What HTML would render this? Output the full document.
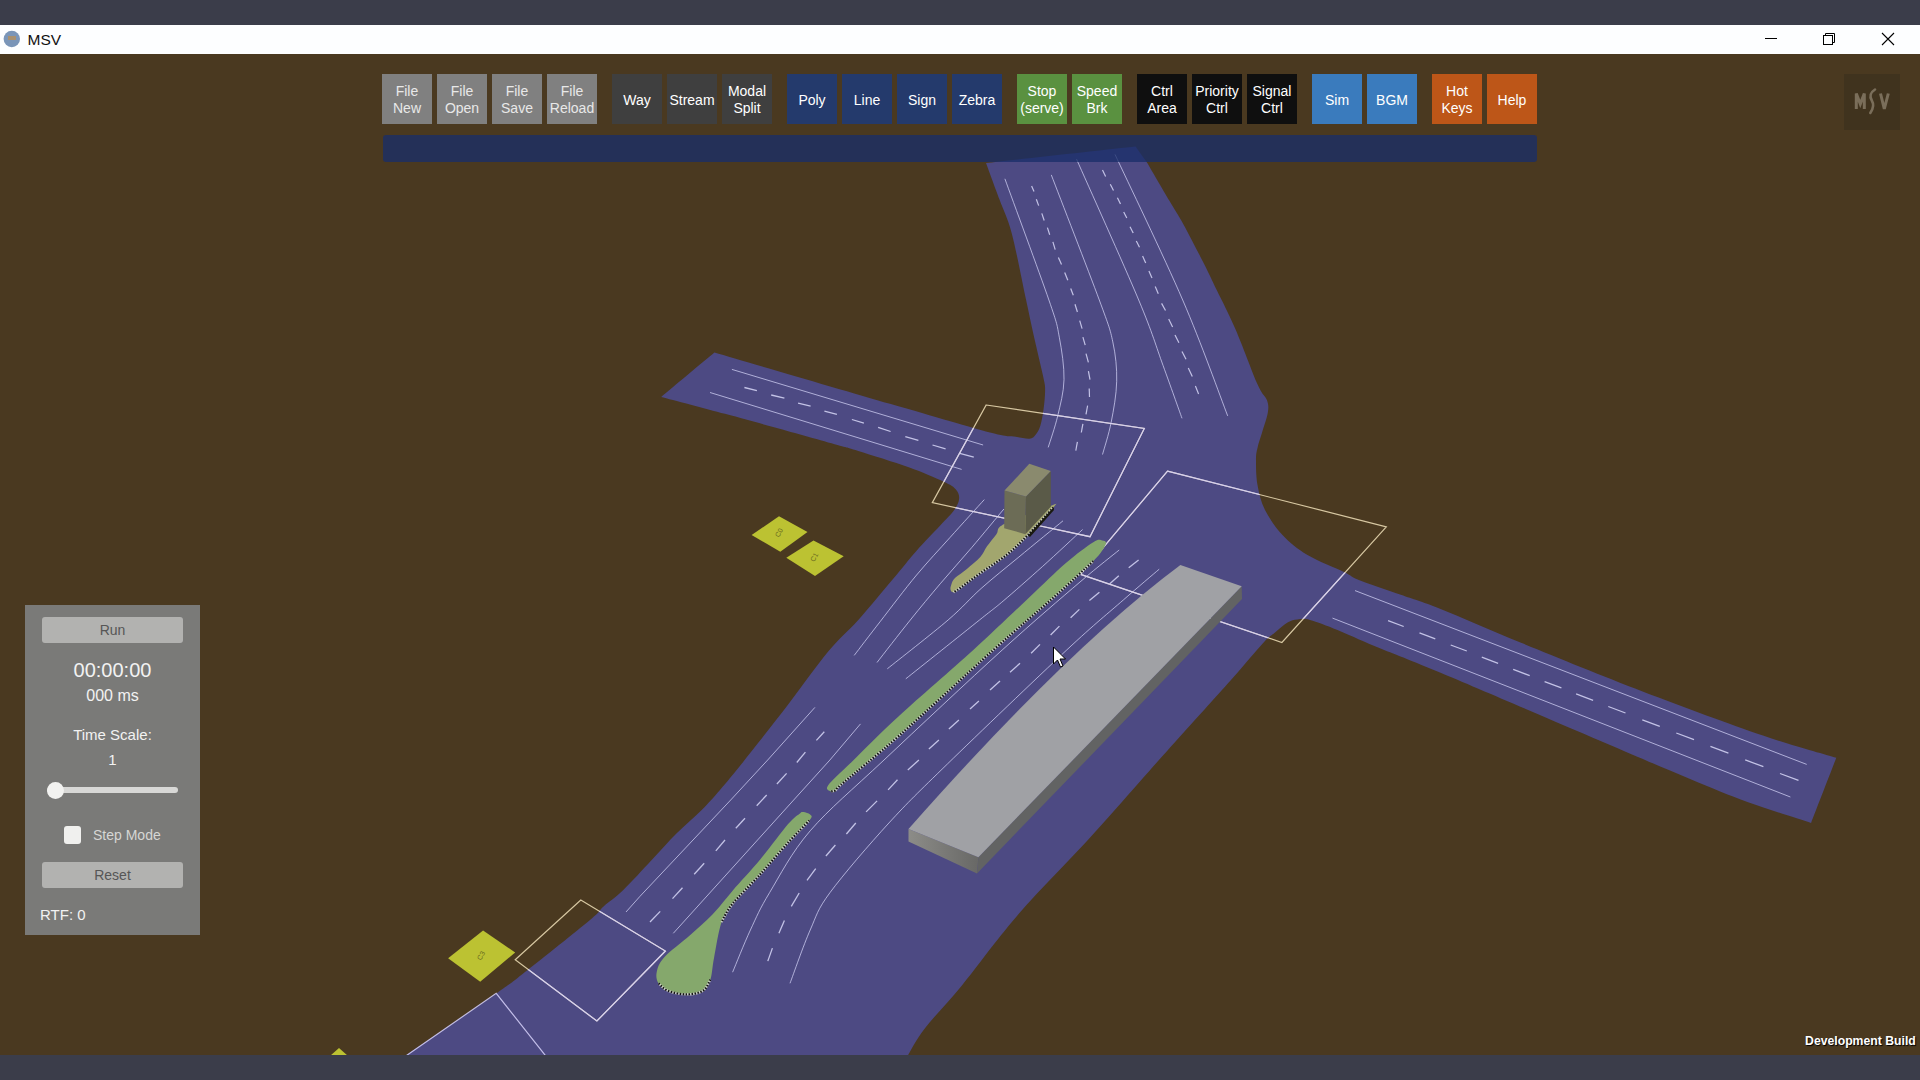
<!DOCTYPE html>
<html><head><meta charset="utf-8">
<style>
*{margin:0;padding:0;box-sizing:border-box}
html,body{width:1920px;height:1080px;overflow:hidden;background:#3b3d4a;font-family:"Liberation Sans",sans-serif}
#top{position:absolute;left:0;top:0;width:1920px;height:25px;background:#3b3d4a}
#title{position:absolute;left:0;top:25px;width:1920px;height:29px;background:#fdfeff}
#title .ic{position:absolute;left:4px;top:31px}
#scene{position:absolute;left:0;top:54px;width:1920px;height:1001px;background:#4a3920;overflow:hidden}
#bottom{position:absolute;left:0;top:1055px;width:1920px;height:25px;background:#3b3d4a}
.btn{position:absolute;top:74px;width:50px;height:50px;padding-top:2px;color:#fff;font-size:14px;line-height:17px;display:flex;align-items:center;justify-content:center;text-align:center}
.g1{background:#808080;color:#e8e8e8}
.g2{background:#3f3f3f}
.g3{background:#243a6c}
.g4{background:#5a9140}
.g5{background:#0f0f0f}
.g6{background:#3a7bbd}
.g7{background:#bd5618}
#bar{position:absolute;left:383px;top:135px;width:1154px;height:27px;background:rgba(25,45,105,0.77);border-radius:3px}
#panel{position:absolute;left:25px;top:605px;width:175px;height:330px;background:#7a7a78}
.pb{position:absolute;left:17px;width:141px;height:26px;background:#b2b2b0;border-radius:3px;color:#565656;font-size:14px;text-align:center;line-height:26px}
.pt{position:absolute;left:0;width:175px;text-align:center;color:#f2f2f2}
#dev{position:absolute;right:4px;top:1032.5px;color:#fff;font-weight:bold;font-size:13px;text-shadow:1px 1px 1px #000;transform:scaleX(0.94);transform-origin:right center;white-space:nowrap}
</style></head><body>
<div id="top"></div>
<div id="title">
  <svg width="1920" height="29" style="position:absolute;left:0;top:0">
    <circle cx="11.8" cy="14" r="8.2" fill="#7a95b8"/>
    <rect x="8" y="11" width="8" height="4" fill="#a89070"/>
    <text x="27.5" y="19.5" font-family="Liberation Sans" font-size="15.5" fill="#111">MSV</text>
    <line x1="1765" y1="13.5" x2="1777" y2="13.5" stroke="#000" stroke-width="1"/>
    <rect x="1823.5" y="10.5" width="9" height="9" fill="none" stroke="#000" stroke-width="1"/>
    <path d="M1825.5 10.5 V8.5 H1834.5 V17.5 H1832.5" fill="none" stroke="#000" stroke-width="1"/>
    <path d="M1882 8 L1894 20 M1894 8 L1882 20" stroke="#000" stroke-width="1.1"/>
  </svg>
</div>
<div id="scene">
<svg id="world" width="1920" height="1001" viewBox="0 54 1920 1001" style="position:absolute;left:0;top:0">
<defs><clipPath id="roadclip"><path d="M405.0,1056.0 C420.3,1045.5 476.7,1007.2 497.0,993.0 C517.3,978.8 511.2,983.0 526.7,970.8 C542.2,958.6 577.2,930.7 590.0,920.0 C602.8,909.3 597.8,911.7 603.3,906.7 C608.8,901.7 615.2,897.8 623.3,890.0 C631.4,882.2 642.8,869.5 651.7,860.0 C660.6,850.5 668.4,841.6 676.7,833.3 C685.0,825.0 694.5,817.2 701.7,810.0 C708.9,802.8 713.1,798.0 720.0,790.0 C726.9,782.0 731.8,776.1 743.3,761.7 C754.8,747.3 774.8,721.8 788.9,703.4 C803.0,685.0 816.6,665.4 828.2,651.5 C839.8,637.6 847.5,632.1 858.3,620.0 C869.1,607.9 883.3,590.6 893.0,579.1 C902.7,567.6 908.7,559.6 916.6,550.7 C924.5,541.8 933.9,532.4 940.2,525.6 C946.5,518.8 951.2,514.3 954.4,509.8 C957.5,505.3 958.9,502.2 959.1,498.8 C959.4,495.4 958.5,492.3 955.9,489.4 C953.3,486.5 951.2,485.2 943.3,481.5 C935.4,477.8 922.9,472.4 908.7,467.3 C894.5,462.2 870.2,454.7 858.3,451.0 C846.4,447.3 851.4,448.9 837.5,445.0 C823.6,441.1 793.8,432.7 775.0,427.5 C756.2,422.3 744.0,418.9 725.0,413.8 C706.0,408.6 671.9,399.7 661.2,396.9 C670.1,389.5 705.5,359.9 714.4,352.5 C743.7,361.0 844.1,390.4 890.0,403.8 C935.9,417.1 969.4,427.1 990.0,432.5 C1010.6,437.9 1007.0,435.4 1013.6,436.4 C1020.2,437.4 1025.7,439.0 1029.4,438.7 C1033.1,438.4 1033.8,437.0 1035.6,434.8 C1037.4,432.6 1039.1,429.6 1040.4,425.4 C1041.7,421.2 1042.7,415.4 1043.5,409.6 C1044.3,403.8 1045.1,395.9 1045.1,390.7 C1045.1,385.4 1045.3,387.0 1043.5,378.1 C1041.7,369.2 1037.0,350.2 1034.1,337.2 C1031.2,324.2 1029.8,317.2 1026.1,300.0 C1022.4,282.8 1016.3,250.7 1011.9,233.9 C1007.5,217.1 1003.7,211.1 999.4,199.3 C995.1,187.5 988.2,169.1 986.0,163.0 C1010.9,160.2 1110.6,149.2 1135.5,146.5 C1137.5,149.2 1145.3,160.2 1147.3,163.0 C1151.0,169.3 1163.4,190.6 1169.4,200.8 C1175.4,211.0 1177.7,213.9 1183.5,224.4 C1189.3,234.9 1198.5,252.9 1204.0,263.8 C1209.5,274.7 1211.4,279.1 1216.7,290.0 C1222.0,300.9 1228.8,313.7 1235.6,329.4 C1242.4,345.1 1252.4,372.6 1257.6,384.4 C1262.8,396.2 1265.3,395.5 1267.0,400.2 C1268.7,404.9 1268.6,407.6 1267.8,412.8 C1267.0,418.1 1264.0,425.9 1262.3,431.7 C1260.6,437.5 1258.6,442.7 1257.6,447.4 C1256.5,452.1 1256.0,453.7 1256.0,460.0 C1256.0,466.3 1256.0,476.7 1257.5,485.0 C1259.0,493.3 1260.8,501.7 1265.0,510.0 C1269.2,518.3 1275.4,527.5 1282.5,535.0 C1289.6,542.5 1297.1,548.8 1307.5,555.0 C1317.9,561.2 1336.5,568.3 1345.0,572.5 C1353.5,576.7 1349.5,576.3 1358.8,580.0 C1368.0,583.7 1387.3,590.0 1400.8,594.8 C1414.3,599.6 1419.8,600.7 1440.0,608.8 C1460.2,616.8 1487.9,629.3 1521.7,643.1 C1555.5,656.9 1602.4,676.1 1642.6,691.5 C1682.8,706.9 1730.7,724.6 1763.0,735.6 C1795.3,746.6 1824.1,754.1 1836.3,757.8 C1832.1,768.7 1815.3,812.1 1811.1,823.0 C1800.6,819.5 1768.5,809.6 1748.1,802.2 C1727.7,794.8 1713.6,788.8 1688.9,778.5 C1664.2,768.2 1641.5,758.4 1600.0,740.7 C1558.5,723.0 1477.5,688.2 1440.0,672.5 C1402.5,656.8 1392.1,653.3 1375.0,646.2 C1357.9,639.2 1348.3,634.4 1337.5,630.0 C1326.7,625.6 1316.7,621.8 1310.0,620.0 C1303.3,618.2 1301.2,619.0 1297.5,619.4 C1293.8,619.8 1291.2,620.3 1287.5,622.5 C1283.8,624.7 1279.2,629.0 1275.0,632.5 C1270.8,636.0 1269.8,635.8 1262.5,643.8 C1255.2,651.7 1245.3,664.0 1231.0,680.0 C1216.7,696.0 1192.2,723.0 1176.9,740.0 C1161.6,757.0 1154.1,765.5 1139.3,782.2 C1124.5,798.9 1105.9,820.4 1087.9,840.0 C1069.9,859.6 1046.0,883.6 1031.1,900.0 C1016.2,916.4 1010.1,924.2 998.5,938.5 C986.9,952.8 973.9,970.8 961.5,985.9 C949.1,1001.0 933.4,1017.2 924.4,1028.9 C915.4,1040.6 910.3,1051.5 907.5,1056.0 C823.8,1056.0 488.8,1056.0 405.0,1056.0 Z"/></clipPath></defs>
<path d="M405.0,1056.0 C420.3,1045.5 476.7,1007.2 497.0,993.0 C517.3,978.8 511.2,983.0 526.7,970.8 C542.2,958.6 577.2,930.7 590.0,920.0 C602.8,909.3 597.8,911.7 603.3,906.7 C608.8,901.7 615.2,897.8 623.3,890.0 C631.4,882.2 642.8,869.5 651.7,860.0 C660.6,850.5 668.4,841.6 676.7,833.3 C685.0,825.0 694.5,817.2 701.7,810.0 C708.9,802.8 713.1,798.0 720.0,790.0 C726.9,782.0 731.8,776.1 743.3,761.7 C754.8,747.3 774.8,721.8 788.9,703.4 C803.0,685.0 816.6,665.4 828.2,651.5 C839.8,637.6 847.5,632.1 858.3,620.0 C869.1,607.9 883.3,590.6 893.0,579.1 C902.7,567.6 908.7,559.6 916.6,550.7 C924.5,541.8 933.9,532.4 940.2,525.6 C946.5,518.8 951.2,514.3 954.4,509.8 C957.5,505.3 958.9,502.2 959.1,498.8 C959.4,495.4 958.5,492.3 955.9,489.4 C953.3,486.5 951.2,485.2 943.3,481.5 C935.4,477.8 922.9,472.4 908.7,467.3 C894.5,462.2 870.2,454.7 858.3,451.0 C846.4,447.3 851.4,448.9 837.5,445.0 C823.6,441.1 793.8,432.7 775.0,427.5 C756.2,422.3 744.0,418.9 725.0,413.8 C706.0,408.6 671.9,399.7 661.2,396.9 C670.1,389.5 705.5,359.9 714.4,352.5 C743.7,361.0 844.1,390.4 890.0,403.8 C935.9,417.1 969.4,427.1 990.0,432.5 C1010.6,437.9 1007.0,435.4 1013.6,436.4 C1020.2,437.4 1025.7,439.0 1029.4,438.7 C1033.1,438.4 1033.8,437.0 1035.6,434.8 C1037.4,432.6 1039.1,429.6 1040.4,425.4 C1041.7,421.2 1042.7,415.4 1043.5,409.6 C1044.3,403.8 1045.1,395.9 1045.1,390.7 C1045.1,385.4 1045.3,387.0 1043.5,378.1 C1041.7,369.2 1037.0,350.2 1034.1,337.2 C1031.2,324.2 1029.8,317.2 1026.1,300.0 C1022.4,282.8 1016.3,250.7 1011.9,233.9 C1007.5,217.1 1003.7,211.1 999.4,199.3 C995.1,187.5 988.2,169.1 986.0,163.0 C1010.9,160.2 1110.6,149.2 1135.5,146.5 C1137.5,149.2 1145.3,160.2 1147.3,163.0 C1151.0,169.3 1163.4,190.6 1169.4,200.8 C1175.4,211.0 1177.7,213.9 1183.5,224.4 C1189.3,234.9 1198.5,252.9 1204.0,263.8 C1209.5,274.7 1211.4,279.1 1216.7,290.0 C1222.0,300.9 1228.8,313.7 1235.6,329.4 C1242.4,345.1 1252.4,372.6 1257.6,384.4 C1262.8,396.2 1265.3,395.5 1267.0,400.2 C1268.7,404.9 1268.6,407.6 1267.8,412.8 C1267.0,418.1 1264.0,425.9 1262.3,431.7 C1260.6,437.5 1258.6,442.7 1257.6,447.4 C1256.5,452.1 1256.0,453.7 1256.0,460.0 C1256.0,466.3 1256.0,476.7 1257.5,485.0 C1259.0,493.3 1260.8,501.7 1265.0,510.0 C1269.2,518.3 1275.4,527.5 1282.5,535.0 C1289.6,542.5 1297.1,548.8 1307.5,555.0 C1317.9,561.2 1336.5,568.3 1345.0,572.5 C1353.5,576.7 1349.5,576.3 1358.8,580.0 C1368.0,583.7 1387.3,590.0 1400.8,594.8 C1414.3,599.6 1419.8,600.7 1440.0,608.8 C1460.2,616.8 1487.9,629.3 1521.7,643.1 C1555.5,656.9 1602.4,676.1 1642.6,691.5 C1682.8,706.9 1730.7,724.6 1763.0,735.6 C1795.3,746.6 1824.1,754.1 1836.3,757.8 C1832.1,768.7 1815.3,812.1 1811.1,823.0 C1800.6,819.5 1768.5,809.6 1748.1,802.2 C1727.7,794.8 1713.6,788.8 1688.9,778.5 C1664.2,768.2 1641.5,758.4 1600.0,740.7 C1558.5,723.0 1477.5,688.2 1440.0,672.5 C1402.5,656.8 1392.1,653.3 1375.0,646.2 C1357.9,639.2 1348.3,634.4 1337.5,630.0 C1326.7,625.6 1316.7,621.8 1310.0,620.0 C1303.3,618.2 1301.2,619.0 1297.5,619.4 C1293.8,619.8 1291.2,620.3 1287.5,622.5 C1283.8,624.7 1279.2,629.0 1275.0,632.5 C1270.8,636.0 1269.8,635.8 1262.5,643.8 C1255.2,651.7 1245.3,664.0 1231.0,680.0 C1216.7,696.0 1192.2,723.0 1176.9,740.0 C1161.6,757.0 1154.1,765.5 1139.3,782.2 C1124.5,798.9 1105.9,820.4 1087.9,840.0 C1069.9,859.6 1046.0,883.6 1031.1,900.0 C1016.2,916.4 1010.1,924.2 998.5,938.5 C986.9,952.8 973.9,970.8 961.5,985.9 C949.1,1001.0 933.4,1017.2 924.4,1028.9 C915.4,1040.6 910.3,1051.5 907.5,1056.0 C823.8,1056.0 488.8,1056.0 405.0,1056.0 Z" fill="#4d4a83"/>
<polyline points="731.9,369.4 983.1,445.0" fill="none" stroke="rgba(215,215,250,0.72)" stroke-width="1.0"/>
<polyline points="710.0,392.5 961.6,469.4" fill="none" stroke="rgba(215,215,250,0.72)" stroke-width="1.0"/>
<polyline points="1332.5,618.1 1790.4,797.0" fill="none" stroke="rgba(215,215,250,0.72)" stroke-width="1.0"/>
<polyline points="1355.0,590.6 1806.7,764.4" fill="none" stroke="rgba(215,215,250,0.72)" stroke-width="1.0"/>
<line x1="744.4" y1="387.5" x2="756.9" y2="390.6" stroke="rgba(225,225,255,0.8)" stroke-width="1.3"/>
<line x1="771.2" y1="395.0" x2="784.4" y2="398.1" stroke="rgba(225,225,255,0.8)" stroke-width="1.3"/>
<line x1="798.1" y1="403.1" x2="810.6" y2="406.2" stroke="rgba(225,225,255,0.8)" stroke-width="1.3"/>
<line x1="824.4" y1="411.2" x2="836.9" y2="414.4" stroke="rgba(225,225,255,0.8)" stroke-width="1.3"/>
<line x1="851.9" y1="419.5" x2="863.9" y2="423.2" stroke="rgba(225,225,255,0.8)" stroke-width="1.3"/>
<line x1="878.1" y1="427.4" x2="890.6" y2="431.5" stroke="rgba(225,225,255,0.8)" stroke-width="1.3"/>
<line x1="905.3" y1="436.6" x2="918.4" y2="440.3" stroke="rgba(225,225,255,0.8)" stroke-width="1.3"/>
<line x1="932.5" y1="445.0" x2="945.6" y2="448.8" stroke="rgba(225,225,255,0.8)" stroke-width="1.3"/>
<line x1="959.7" y1="453.4" x2="973.8" y2="457.2" stroke="rgba(225,225,255,0.8)" stroke-width="1.3"/>
<line x1="1388.1" y1="620.6" x2="1403.7" y2="626.5" stroke="rgba(225,225,255,0.8)" stroke-width="1.3"/>
<line x1="1419.5" y1="632.8" x2="1435.3" y2="638.8" stroke="rgba(225,225,255,0.8)" stroke-width="1.3"/>
<line x1="1450.7" y1="645.0" x2="1466.8" y2="651.0" stroke="rgba(225,225,255,0.8)" stroke-width="1.3"/>
<line x1="1481.8" y1="657.2" x2="1498.1" y2="663.3" stroke="rgba(225,225,255,0.8)" stroke-width="1.3"/>
<line x1="1513.2" y1="669.4" x2="1529.7" y2="675.6" stroke="rgba(225,225,255,0.8)" stroke-width="1.3"/>
<line x1="1544.6" y1="681.7" x2="1561.4" y2="687.9" stroke="rgba(225,225,255,0.8)" stroke-width="1.3"/>
<line x1="1576.1" y1="693.9" x2="1593.1" y2="700.3" stroke="rgba(225,225,255,0.8)" stroke-width="1.3"/>
<line x1="1608.3" y1="706.5" x2="1625.5" y2="713.0" stroke="rgba(225,225,255,0.8)" stroke-width="1.3"/>
<line x1="1642.3" y1="719.8" x2="1659.8" y2="726.3" stroke="rgba(225,225,255,0.8)" stroke-width="1.3"/>
<line x1="1676.3" y1="733.0" x2="1694.0" y2="739.7" stroke="rgba(225,225,255,0.8)" stroke-width="1.3"/>
<line x1="1710.4" y1="746.3" x2="1728.4" y2="753.1" stroke="rgba(225,225,255,0.8)" stroke-width="1.3"/>
<line x1="1745.2" y1="759.9" x2="1763.4" y2="766.7" stroke="rgba(225,225,255,0.8)" stroke-width="1.3"/>
<line x1="1780.0" y1="773.5" x2="1798.5" y2="780.4" stroke="rgba(225,225,255,0.8)" stroke-width="1.3"/>
<line x1="824.3" y1="731.8" x2="816.4" y2="740.4" stroke="rgba(225,225,255,0.8)" stroke-width="1.3"/>
<line x1="805.4" y1="752.2" x2="796.8" y2="762.5" stroke="rgba(225,225,255,0.8)" stroke-width="1.3"/>
<line x1="786.6" y1="773.4" x2="776.9" y2="784.0" stroke="rgba(225,225,255,0.8)" stroke-width="1.3"/>
<line x1="766.7" y1="795.0" x2="756.7" y2="805.8" stroke="rgba(225,225,255,0.8)" stroke-width="1.3"/>
<line x1="745.0" y1="818.3" x2="735.8" y2="828.3" stroke="rgba(225,225,255,0.8)" stroke-width="1.3"/>
<line x1="725.0" y1="840.0" x2="715.8" y2="850.8" stroke="rgba(225,225,255,0.8)" stroke-width="1.3"/>
<line x1="704.2" y1="863.3" x2="694.2" y2="874.2" stroke="rgba(225,225,255,0.8)" stroke-width="1.3"/>
<line x1="682.5" y1="887.7" x2="672.5" y2="898.6" stroke="rgba(225,225,255,0.8)" stroke-width="1.3"/>
<line x1="660.2" y1="911.4" x2="650.0" y2="922.0" stroke="rgba(225,225,255,0.8)" stroke-width="1.3"/>
<line x1="1138.6" y1="559.9" x2="1128.7" y2="567.8" stroke="rgba(225,225,255,0.8)" stroke-width="1.3"/>
<line x1="1118.8" y1="575.8" x2="1109.8" y2="583.7" stroke="rgba(225,225,255,0.8)" stroke-width="1.3"/>
<line x1="1099.4" y1="592.2" x2="1089.4" y2="600.6" stroke="rgba(225,225,255,0.8)" stroke-width="1.3"/>
<line x1="1079.4" y1="609.4" x2="1070.6" y2="617.8" stroke="rgba(225,225,255,0.8)" stroke-width="1.3"/>
<line x1="1059.4" y1="626.1" x2="1050.6" y2="635.0" stroke="rgba(225,225,255,0.8)" stroke-width="1.3"/>
<line x1="1040.0" y1="644.4" x2="1031.1" y2="653.3" stroke="rgba(225,225,255,0.8)" stroke-width="1.3"/>
<line x1="1020.0" y1="663.3" x2="1010.0" y2="672.2" stroke="rgba(225,225,255,0.8)" stroke-width="1.3"/>
<line x1="1000.0" y1="681.1" x2="990.0" y2="690.0" stroke="rgba(225,225,255,0.8)" stroke-width="1.3"/>
<line x1="978.9" y1="701.1" x2="970.0" y2="708.9" stroke="rgba(225,225,255,0.8)" stroke-width="1.3"/>
<line x1="958.9" y1="720.0" x2="948.9" y2="728.9" stroke="rgba(225,225,255,0.8)" stroke-width="1.3"/>
<line x1="938.9" y1="740.0" x2="928.9" y2="748.9" stroke="rgba(225,225,255,0.8)" stroke-width="1.3"/>
<line x1="918.9" y1="760.0" x2="907.8" y2="770.0" stroke="rgba(225,225,255,0.8)" stroke-width="1.3"/>
<line x1="897.5" y1="779.7" x2="888.1" y2="789.9" stroke="rgba(225,225,255,0.8)" stroke-width="1.3"/>
<line x1="877.1" y1="800.9" x2="866.1" y2="811.9" stroke="rgba(225,225,255,0.8)" stroke-width="1.3"/>
<line x1="855.8" y1="823.0" x2="846.4" y2="834.0" stroke="rgba(225,225,255,0.8)" stroke-width="1.3"/>
<line x1="835.4" y1="845.0" x2="825.9" y2="856.0" stroke="rgba(225,225,255,0.8)" stroke-width="1.3"/>
<line x1="815.7" y1="868.6" x2="807.0" y2="880.4" stroke="rgba(225,225,255,0.8)" stroke-width="1.3"/>
<line x1="799.2" y1="893.0" x2="791.3" y2="906.4" stroke="rgba(225,225,255,0.8)" stroke-width="1.3"/>
<line x1="784.4" y1="920.4" x2="778.9" y2="933.3" stroke="rgba(225,225,255,0.8)" stroke-width="1.3"/>
<line x1="772.4" y1="948.1" x2="767.8" y2="961.1" stroke="rgba(225,225,255,0.8)" stroke-width="1.3"/>
<path d="M1004.9,178.8 C1012.2,199.0 1039.8,273.6 1048.9,300.0 C1058.0,326.4 1056.8,323.9 1059.3,337.2 C1061.8,350.5 1064.3,366.6 1064.0,379.7 C1063.7,392.8 1060.3,404.6 1057.7,415.9 C1055.1,427.2 1049.8,442.1 1048.2,447.4" fill="none" stroke="rgba(215,215,250,0.72)" stroke-width="1.0"/>
<path d="M1051.3,174.9 C1059.3,195.8 1089.0,272.2 1099.3,300.0 C1109.5,327.8 1109.9,328.3 1112.8,341.9 C1115.7,355.4 1117.0,367.9 1116.7,381.3 C1116.4,394.7 1113.6,410.0 1111.2,422.2 C1108.8,434.4 1104.0,449.1 1102.5,454.5" fill="none" stroke="rgba(215,215,250,0.72)" stroke-width="1.0"/>
<path d="M1076.5,159.1 C1086.9,182.6 1124.3,265.6 1138.7,300.0 C1153.1,334.4 1155.9,345.9 1163.1,365.6 C1170.3,385.3 1178.8,409.5 1182.0,418.3" fill="none" stroke="rgba(215,215,250,0.72)" stroke-width="1.0"/>
<path d="M1115.0,154.4 C1126.3,178.7 1163.9,256.4 1182.7,300.0 C1201.5,343.6 1220.2,396.6 1227.7,415.9" fill="none" stroke="rgba(215,215,250,0.72)" stroke-width="1.0"/>
<line x1="1031.6" y1="185.9" x2="1034.0" y2="191.4" stroke="rgba(225,225,255,0.8)" stroke-width="1.2"/>
<line x1="1036.3" y1="199.3" x2="1038.7" y2="205.6" stroke="rgba(225,225,255,0.8)" stroke-width="1.2"/>
<line x1="1041.8" y1="213.4" x2="1044.2" y2="220.5" stroke="rgba(225,225,255,0.8)" stroke-width="1.2"/>
<line x1="1047.4" y1="227.6" x2="1049.7" y2="234.7" stroke="rgba(225,225,255,0.8)" stroke-width="1.2"/>
<line x1="1052.9" y1="241.8" x2="1055.2" y2="249.6" stroke="rgba(225,225,255,0.8)" stroke-width="1.2"/>
<line x1="1058.4" y1="257.5" x2="1061.5" y2="264.6" stroke="rgba(225,225,255,0.8)" stroke-width="1.2"/>
<line x1="1064.7" y1="272.5" x2="1067.8" y2="280.3" stroke="rgba(225,225,255,0.8)" stroke-width="1.2"/>
<line x1="1070.7" y1="288.5" x2="1073.3" y2="295.3" stroke="rgba(225,225,255,0.8)" stroke-width="1.2"/>
<line x1="1075.0" y1="304.2" x2="1077.4" y2="312.0" stroke="rgba(225,225,255,0.8)" stroke-width="1.2"/>
<line x1="1079.7" y1="320.7" x2="1082.1" y2="328.6" stroke="rgba(225,225,255,0.8)" stroke-width="1.2"/>
<line x1="1082.9" y1="337.2" x2="1085.2" y2="345.1" stroke="rgba(225,225,255,0.8)" stroke-width="1.2"/>
<line x1="1086.0" y1="353.7" x2="1088.4" y2="362.4" stroke="rgba(225,225,255,0.8)" stroke-width="1.2"/>
<line x1="1088.4" y1="371.1" x2="1090.0" y2="379.7" stroke="rgba(225,225,255,0.8)" stroke-width="1.2"/>
<line x1="1089.2" y1="388.4" x2="1089.5" y2="397.0" stroke="rgba(225,225,255,0.8)" stroke-width="1.2"/>
<line x1="1087.6" y1="405.7" x2="1086.0" y2="414.3" stroke="rgba(225,225,255,0.8)" stroke-width="1.2"/>
<line x1="1082.9" y1="423.8" x2="1081.3" y2="432.5" stroke="rgba(225,225,255,0.8)" stroke-width="1.2"/>
<line x1="1077.4" y1="441.9" x2="1075.8" y2="450.6" stroke="rgba(225,225,255,0.8)" stroke-width="1.2"/>
<line x1="1102.5" y1="170.1" x2="1105.6" y2="176.4" stroke="rgba(225,225,255,0.8)" stroke-width="1.2"/>
<line x1="1110.3" y1="184.3" x2="1113.5" y2="190.6" stroke="rgba(225,225,255,0.8)" stroke-width="1.2"/>
<line x1="1117.4" y1="197.7" x2="1120.5" y2="204.0" stroke="rgba(225,225,255,0.8)" stroke-width="1.2"/>
<line x1="1123.7" y1="211.9" x2="1126.8" y2="218.1" stroke="rgba(225,225,255,0.8)" stroke-width="1.2"/>
<line x1="1130.0" y1="226.8" x2="1133.2" y2="233.1" stroke="rgba(225,225,255,0.8)" stroke-width="1.2"/>
<line x1="1136.3" y1="241.0" x2="1139.5" y2="247.3" stroke="rgba(225,225,255,0.8)" stroke-width="1.2"/>
<line x1="1142.6" y1="255.9" x2="1145.7" y2="263.0" stroke="rgba(225,225,255,0.8)" stroke-width="1.2"/>
<line x1="1148.9" y1="270.9" x2="1152.0" y2="278.0" stroke="rgba(225,225,255,0.8)" stroke-width="1.2"/>
<line x1="1155.2" y1="286.6" x2="1158.3" y2="293.7" stroke="rgba(225,225,255,0.8)" stroke-width="1.2"/>
<line x1="1161.6" y1="303.4" x2="1165.5" y2="310.5" stroke="rgba(225,225,255,0.8)" stroke-width="1.2"/>
<line x1="1168.7" y1="319.1" x2="1172.6" y2="327.0" stroke="rgba(225,225,255,0.8)" stroke-width="1.2"/>
<line x1="1175.0" y1="334.9" x2="1178.9" y2="342.7" stroke="rgba(225,225,255,0.8)" stroke-width="1.2"/>
<line x1="1182.0" y1="351.4" x2="1186.0" y2="359.3" stroke="rgba(225,225,255,0.8)" stroke-width="1.2"/>
<line x1="1188.3" y1="367.9" x2="1192.3" y2="376.6" stroke="rgba(225,225,255,0.8)" stroke-width="1.2"/>
<line x1="1195.4" y1="386.0" x2="1198.6" y2="393.9" stroke="rgba(225,225,255,0.8)" stroke-width="1.2"/>
<path d="M984.3,499.6 C978.6,505.9 961.3,524.9 950.0,537.5 C938.7,550.1 928.3,561.0 916.6,575.0 C904.9,589.0 890.4,608.4 880.0,621.8 C869.6,635.2 858.5,649.8 854.2,655.4" fill="none" stroke="rgba(215,215,250,0.72)" stroke-width="1.0"/>
<path d="M1003.9,509.0 C998.5,515.4 982.3,535.1 971.7,547.6 C961.1,560.1 950.4,571.7 940.2,583.8 C930.0,595.9 920.8,606.9 910.3,620.0 C899.8,633.1 882.5,655.4 877.0,662.5" fill="none" stroke="rgba(215,215,250,0.72)" stroke-width="1.0"/>
<path d="M1063.0,520.8 C1055.7,526.8 1032.5,545.7 1018.9,557.0 C1005.2,568.3 992.9,578.0 981.1,588.5 C969.3,599.0 963.7,606.6 948.1,620.0 C932.5,633.4 897.4,660.7 887.3,668.8" fill="none" stroke="rgba(215,215,250,0.72)" stroke-width="1.0"/>
<path d="M1082.6,529.5 C1075.9,535.7 1055.8,554.6 1042.5,566.5 C1029.2,578.4 1013.6,592.2 1003.1,601.1 C992.6,610.0 995.7,607.0 979.5,620.0 C963.3,633.0 918.1,669.0 905.8,678.8" fill="none" stroke="rgba(215,215,250,0.72)" stroke-width="1.0"/>
<polyline points="814.9,707.4 767.7,760.0 730.7,800.0 640.0,896.3 626.0,912.0" fill="none" stroke="rgba(215,215,250,0.72)" stroke-width="1.0"/>
<polyline points="860.5,723.9 829.9,760.0 793.7,800.0 673.3,933.3" fill="none" stroke="rgba(215,215,250,0.72)" stroke-width="1.0"/>
<path d="M1119.2,550.0 C1112.7,555.3 1099.5,565.3 1080.0,582.0 C1060.5,598.7 1034.9,620.3 1002.2,650.0 C969.5,679.7 916.0,729.9 884.0,760.0 C852.0,790.1 829.3,808.7 810.2,830.8 C791.1,852.9 779.6,876.1 769.6,892.6 C759.6,909.1 756.6,916.7 750.4,930.0 C744.2,943.3 735.6,965.2 732.6,972.2" fill="none" stroke="rgba(215,215,250,0.72)" stroke-width="1.0"/>
<path d="M1159.2,569.2 C1153.2,574.3 1138.7,586.5 1123.3,600.0 C1107.9,613.5 1096.0,622.7 1066.7,650.0 C1037.4,677.3 977.0,735.2 947.4,764.0 C917.8,792.8 908.5,801.6 888.9,823.0 C869.3,844.4 843.1,874.8 830.0,892.6 C816.9,910.4 816.9,914.9 810.2,930.0 C803.5,945.1 793.4,974.4 790.0,983.3" fill="none" stroke="rgba(215,215,250,0.72)" stroke-width="1.0"/>
<polygon points="986.2,405.0 1144.3,428.5 1090.0,536.7 932.3,502.7" fill="none" stroke="rgba(240,225,185,0.85)" stroke-width="1.2"/>
<polygon points="1167.5,471.2 1386.3,526.8 1281.9,642.5 1080.6,574.4" fill="none" stroke="rgba(240,225,185,0.85)" stroke-width="1.2"/>
<polygon points="580.8,900.0 665.4,951.0 596.9,1021.0 515.2,959.8" fill="none" stroke="rgba(240,225,185,0.85)" stroke-width="1.2"/>
<g clip-path="url(#roadclip)">
<polygon points="986.2,405.0 1144.3,428.5 1090.0,536.7 932.3,502.7" fill="none" stroke="rgba(215,210,250,0.85)" stroke-width="1.2"/>
<polygon points="1167.5,471.2 1386.3,526.8 1281.9,642.5 1080.6,574.4" fill="none" stroke="rgba(215,210,250,0.85)" stroke-width="1.2"/>
<polygon points="580.8,900.0 665.4,951.0 596.9,1021.0 515.2,959.8" fill="none" stroke="rgba(215,210,250,0.85)" stroke-width="1.2"/>
</g>
<polyline points="405.8,1056.0 496.2,993.3 545.8,1056.0" fill="none" stroke="rgba(215,210,250,0.85)" stroke-width="1.2"/>
<polygon points="779.0,516.3 807.5,532.1 780.3,551.7 751.6,535.1" fill="#bcc232"/>
<polygon points="813.5,540.5 843.7,556.3 815.0,575.9 786.3,557.8" fill="#bcc232"/>
<polygon points="483.1,930.6 515.2,952.5 480.2,981.7 448.1,958.3" fill="#bcc232"/>
<polygon points="339.0,1048.0 348.0,1056.0 330.0,1056.0" fill="#bcc232"/>
<text x="779.6" y="533" font-family="Liberation Sans" font-size="7" fill="#6a6a20" text-anchor="middle" dominant-baseline="middle" transform="rotate(-62 779.6 533)">C0</text>
<text x="814.8" y="557.5" font-family="Liberation Sans" font-size="7" fill="#6a6a20" text-anchor="middle" dominant-baseline="middle" transform="rotate(-62 814.8 557.5)">C1</text>
<text x="481.5" y="956" font-family="Liberation Sans" font-size="7" fill="#6a6a20" text-anchor="middle" dominant-baseline="middle" transform="rotate(-62 481.5 956)">C3</text>
<path d="M1105.6,544.4 C1104.1,547.8 1101.8,552.4 1093.3,561.1 C1084.8,569.8 1071.1,581.9 1054.4,596.7 C1037.7,611.5 1019.0,627.0 993.3,650.0 C967.6,673.0 924.9,712.9 900.0,734.9 C875.1,756.9 854.7,772.9 844.0,782.1 C833.3,791.3 838.2,788.4 836.0,790.0 C833.8,791.6 832.3,792.3 831.0,791.5 C829.7,790.7 824.7,790.3 828.2,785.3 C831.7,780.3 840.1,773.2 851.9,761.7 C863.7,750.2 878.8,734.6 899.0,716.0 C919.2,697.4 951.6,669.7 973.3,650.0 C994.9,630.3 1013.5,612.2 1028.9,597.8 C1044.3,583.3 1054.9,572.6 1065.6,563.3 C1076.3,554.0 1087.2,546.0 1093.3,542.2 C1099.4,538.4 1100.2,540.2 1102.2,540.6 C1104.2,541.0 1107.1,541.0 1105.6,544.4 Z" fill="#85a86c"/>
<path d="M1093.3,561.1 C1086.8,567.0 1071.1,581.9 1054.4,596.7 C1037.7,611.5 1019.0,627.0 993.3,650.0 C967.6,673.0 924.9,712.9 900.0,734.9 C875.1,756.9 854.7,772.9 844.0,782.1 C833.3,791.3 838.2,788.4 836.0,790.0 C833.8,791.6 831.8,791.2 831.0,791.5" stroke="rgba(225,228,220,0.75)" stroke-width="2.2" fill="none"/>
<path d="M1093.3,561.1 C1086.8,567.0 1071.1,581.9 1054.4,596.7 C1037.7,611.5 1019.0,627.0 993.3,650.0 C967.6,673.0 924.9,712.9 900.0,734.9 C875.1,756.9 854.7,772.9 844.0,782.1 C833.3,791.3 838.2,788.4 836.0,790.0 C833.8,791.6 831.8,791.2 831.0,791.5" stroke="#151515" stroke-width="2.2" stroke-dasharray="1.5 1.5" fill="none"/>
<path d="M810.4,814.8 C811.5,816.2 813.1,815.8 809.4,820.4 C805.7,825.0 796.3,833.6 788.1,842.6 C779.9,851.6 769.6,863.9 760.4,874.1 C751.1,884.3 739.1,895.7 732.6,903.7 C726.1,911.7 724.6,913.2 721.5,922.2 C718.4,931.2 716.0,947.8 714.1,957.4 C712.2,967.0 712.2,974.0 710.4,979.6 C708.5,985.2 707.0,988.2 703.0,990.7 C699.0,993.2 692.2,994.4 686.3,994.4 C680.4,994.4 672.4,992.6 667.8,990.7 C663.2,988.9 660.4,986.4 658.5,983.3 C656.6,980.2 655.8,976.5 656.7,972.2 C657.6,967.9 658.6,963.6 664.1,957.4 C669.6,951.2 682.0,942.3 690.0,935.2 C698.0,928.1 705.1,922.2 712.2,914.8 C719.3,907.4 724.6,900.0 732.6,890.7 C740.6,881.5 751.1,870.4 760.4,859.3 C769.6,848.2 781.6,831.7 788.1,824.1 C794.6,816.5 796.8,815.9 799.3,813.9 C801.8,811.9 801.1,811.9 803.0,812.0 C804.9,812.1 809.3,813.4 810.4,814.8 Z" fill="#85a86c"/>
<path d="M809.4,820.4 C805.9,824.1 796.3,833.6 788.1,842.6 C779.9,851.6 769.6,863.9 760.4,874.1 C751.1,884.3 739.1,895.7 732.6,903.7 C726.1,911.7 723.4,919.1 721.5,922.2" stroke="rgba(225,228,220,0.75)" stroke-width="2.2" fill="none"/>
<path d="M809.4,820.4 C805.9,824.1 796.3,833.6 788.1,842.6 C779.9,851.6 769.6,863.9 760.4,874.1 C751.1,884.3 739.1,895.7 732.6,903.7 C726.1,911.7 723.4,919.1 721.5,922.2" stroke="#151515" stroke-width="2.2" stroke-dasharray="1.5 1.5" fill="none"/>
<path d="M710.4,979.6 C709.2,981.5 707.0,988.2 703.0,990.7 C699.0,993.2 692.2,994.4 686.3,994.4 C680.4,994.4 672.4,992.6 667.8,990.7 C663.2,988.9 660.0,984.5 658.5,983.3" stroke="rgba(225,228,220,0.75)" stroke-width="2.2" fill="none"/>
<path d="M710.4,979.6 C709.2,981.5 707.0,988.2 703.0,990.7 C699.0,993.2 692.2,994.4 686.3,994.4 C680.4,994.4 672.4,992.6 667.8,990.7 C663.2,988.9 660.0,984.5 658.5,983.3" stroke="#151515" stroke-width="2.2" stroke-dasharray="1.5 1.5" fill="none"/>
<path d="M1053.5,507.4 C1049.7,512.4 1035.0,527.8 1027.3,535.6 C1019.6,543.4 1015.0,548.1 1007.2,554.4 C999.4,560.7 988.1,567.6 980.3,573.2 C972.4,578.8 964.6,584.8 960.1,588.0 C955.6,591.2 955.1,592.0 953.5,592.3 C951.9,592.5 950.8,590.9 950.5,589.5 C950.2,588.1 950.8,585.9 951.5,584.0 C952.2,582.1 952.4,580.5 955.0,578.0 C957.6,575.5 962.7,572.5 966.9,569.0 C971.1,565.5 976.9,560.9 980.3,557.1 C983.6,553.3 984.3,550.1 987.0,546.3 C989.7,542.5 993.5,537.9 996.4,534.2 C999.3,530.5 995.2,528.7 1004.2,524.0 C1013.2,519.3 1042.2,508.7 1050.4,505.9 C1058.6,503.1 1057.3,502.4 1053.5,507.4 Z" fill="#a2a66e"/>
<path d="M1053.5,507.4 C1049.1,512.1 1035.0,527.8 1027.3,535.6 C1019.6,543.4 1015.0,548.1 1007.2,554.4 C999.4,560.7 988.1,567.6 980.3,573.2 C972.4,578.8 964.6,584.8 960.1,588.0 C955.6,591.2 954.6,591.6 953.5,592.3" stroke="rgba(225,228,220,0.75)" stroke-width="2.2" fill="none"/>
<path d="M1053.5,507.4 C1049.1,512.1 1035.0,527.8 1027.3,535.6 C1019.6,543.4 1015.0,548.1 1007.2,554.4 C999.4,560.7 988.1,567.6 980.3,573.2 C972.4,578.8 964.6,584.8 960.1,588.0 C955.6,591.2 954.6,591.6 953.5,592.3" stroke="#151515" stroke-width="2.2" stroke-dasharray="1.5 1.5" fill="none"/>
<polygon points="1028.0,535.6 1053.5,507.4 1054.0,510.0 1030.0,537.0" fill="#1a1a10"/>
<polygon points="1004.5,490.6 1026.0,496.6 1025.3,534.2 1004.2,528.2" fill="#6c6c56"/>
<polygon points="1026.0,496.6 1050.8,471.1 1050.8,506.7 1025.3,534.2" fill="#5a5a48"/>
<polygon points="1004.5,490.6 1029.3,463.7 1050.8,471.1 1026.0,496.6" fill="#8a8a6e"/>
<defs><linearGradient id="endg" x1="0" y1="0" x2="1" y2="0"><stop offset="0" stop-color="#8c8c88"/><stop offset="1" stop-color="#686866"/></linearGradient></defs>
<polygon points="1241.7,586.3 1242.0,599.0 977.0,873.5 978.4,857.3" fill="#626363"/>
<polygon points="908.5,829.0 978.4,857.3 977.0,873.5 908.5,841.5" fill="url(#endg)"/>
<path d="M1180.4,565 L1241.7,586.3 L978.4,857.3 L908.5,829 Q1066.75,649.6 1180.4,565 Z" fill="#a0a1a5"/>
<path d="M1053.5,647 l0,17 l4,-4 l3,7 l2.5,-1 l-3,-7 l5.5,0 z" fill="#fff" stroke="#000" stroke-width="1"/>
</svg>
</div>
<div id="bottom"></div>

<div class="btn g1" style="left:382px">File<br>New</div>
<div class="btn g1" style="left:437px">File<br>Open</div>
<div class="btn g1" style="left:492px">File<br>Save</div>
<div class="btn g1" style="left:547px">File<br>Reload</div>
<div class="btn g2" style="left:612px">Way</div>
<div class="btn g2" style="left:667px">Stream</div>
<div class="btn g2" style="left:722px">Modal<br>Split</div>
<div class="btn g3" style="left:787px">Poly</div>
<div class="btn g3" style="left:842px">Line</div>
<div class="btn g3" style="left:897px">Sign</div>
<div class="btn g3" style="left:952px">Zebra</div>
<div class="btn g4" style="left:1017px">Stop<br>(serve)</div>
<div class="btn g4" style="left:1072px">Speed<br>Brk</div>
<div class="btn g5" style="left:1137px">Ctrl<br>Area</div>
<div class="btn g5" style="left:1192px">Priority<br>Ctrl</div>
<div class="btn g5" style="left:1247px">Signal<br>Ctrl</div>
<div class="btn g6" style="left:1312px">Sim</div>
<div class="btn g6" style="left:1367px">BGM</div>
<div class="btn g7" style="left:1432px">Hot<br>Keys</div>
<div class="btn g7" style="left:1487px">Help</div>
<div id="bar"></div>

<div id="logo" style="position:absolute;left:1844px;top:74px;width:56px;height:56px;background:#40331e">
  <svg width="56" height="56" style="position:absolute;left:0;top:0"><g fill="none" stroke="#7a6e5a" stroke-width="3" stroke-linejoin="miter">
  <path d="M12.3,35 V19.5 L16.3,30 L20.3,19.5 V35"/>
  <path d="M31,15.5 C25.5,19 25.5,23 28,27 C30.5,31 29,35 26.3,39" stroke-width="2.6" stroke-linecap="round"/>
  <path d="M36.5,19.5 L40.3,35 L44.3,19.5"/>
  </g></svg>
</div>

<div id="panel">
  <div class="pb" style="top:12px">Run</div>
  <div class="pt" style="top:54px;font-size:20px">00:00:00</div>
  <div class="pt" style="top:82px;font-size:16px">000 ms</div>
  <div class="pt" style="top:121px;font-size:15px">Time Scale:</div>
  <div class="pt" style="top:146px;font-size:15px">1</div>
  <div style="position:absolute;left:22px;top:182px;width:131px;height:6px;border-radius:3px;background:#d8d8d6"></div>
  <div style="position:absolute;left:21.5px;top:176.5px;width:17px;height:17px;border-radius:50%;background:#f2f2f0"></div>
  <div style="position:absolute;left:39px;top:221px;width:17px;height:18px;border-radius:3px;background:#f0f0ee"></div>
  <div class="pt" style="top:222px;left:68px;width:auto;font-size:14px;color:#d6d6d4;text-align:left">Step Mode</div>
  <div class="pb" style="top:257px">Reset</div>
  <div class="pt" style="top:301px;left:15px;width:auto;font-size:15px;text-align:left">RTF: 0</div>
</div>
<div id="dev">Development Build</div>
</body></html>
